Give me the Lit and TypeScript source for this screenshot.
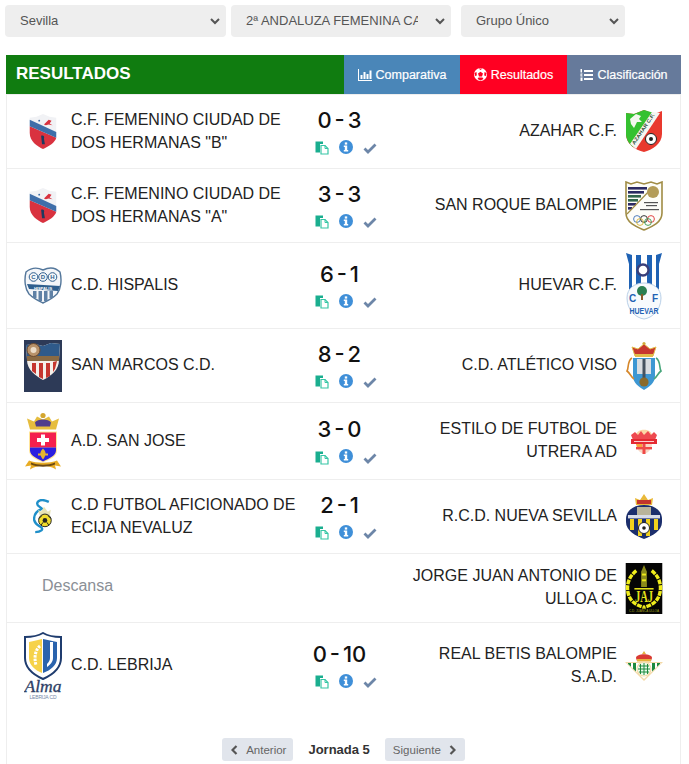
import { css, html, LitElement, svg } from 'lit';
import { customElement } from 'lit/decorators.js';

const shieldDosHermanas = svg`<svg width="30" height="36" viewBox="0 0 30 38">
  <path d="M1 4 L8 3 L15 0 L22 3 L29 4 V20 C29 29 21 34 15 37 C9 34 1 29 1 20 Z" fill="#f1f2f5"/>
  <path d="M1 20 V13 L29 25 C28 30 21 34 15 37 C9 34 1 29 1 20 Z" fill="#d9323f"/>
  <path d="M1 6 L29 19 V25 L1 13 Z" fill="#3e6ea9"/>
  <path d="M16 11 L21 6 L24 7 L22 10 L25 12 L21 11 L18 12 Z" fill="#d9323f"/>
  <circle cx="11" cy="7" r="1" fill="#3e6ea9"/>
  <path d="M13 23 C15 22 17 23 16 26 L17 32 L14 32 Z" fill="#1d3a5f"/>
</svg>`;

const azahar = svg`<svg width="38" height="43" viewBox="0 0 38 43">
  <path d="M1 3 L9 4 L19 0 L29 4 L37 1 V24 C37 34 27 40 19 42 C10 40 1 34 1 24 Z" fill="#e9392e"/>
  <path d="M1 3 L9 4 L19 0 L29 3 L8 37 C3 33 1 28 1 24 Z" fill="#35c130"/>
  <path d="M27 2 L35 3 L11 39 L5 34 Z" fill="#f5f5f0"/>
  <text x="0" y="0" transform="translate(9.500 35) rotate(-56)" font-family="Liberation Sans, sans-serif" font-size="5" font-weight="700" fill="#2f4f38" textLength="36" lengthAdjust="spacingAndGlyphs">AZAHAR C.F.</text>
  <path d="M5 9 L11 4 L16 6 L14 9 L17 12 L12 12 L9 18 L6 14 Z" fill="#f4f7ee"/>
  <circle cx="26" cy="29" r="5.500" fill="#fff" stroke="#222"/>
  <circle cx="26" cy="29" r="2" fill="#222"/>
</svg>`;

const sanRoque = svg`<svg width="38" height="50" viewBox="0 0 38 50">
  <path d="M1 1 L6 3 L12 1 L19 3 L26 1 L32 3 L37 1 V32 C37 42 26 46 19 49 C12 46 1 42 1 32 Z" fill="#fdfdf8" stroke="#a08c45" stroke-width="1.600"/>
  <g fill="#2b2a63"><rect x="3" y="6" width="19" height="2.600"/><rect x="3" y="10" width="16" height="2.600"/></g>
  <g fill="#32664c"><rect x="3" y="14" width="13" height="2.600"/><rect x="3" y="18" width="10" height="2.600"/></g>
  <g fill="#2b2a63"><rect x="3" y="22" width="8" height="2.600"/><rect x="3" y="26" width="4" height="2.600"/></g>
  <path d="M2 33 L28 6" stroke="#a08c45" stroke-width="1.200"/>
  <circle cx="28" cy="11" r="6" fill="#b39c57"/>
  <g fill="#555"><rect x="19" y="21" width="14" height="1.200"/><rect x="21" y="24" width="11" height="1.200"/><rect x="15" y="28" width="19" height="1.200"/></g>
  <g fill="none" stroke-width=".9"><circle cx="12" cy="38" r="3.400" stroke="#3d6fb5"/><circle cx="19" cy="38" r="3.400" stroke="#222"/><circle cx="26" cy="38" r="3.400" stroke="#d33"/><circle cx="15" cy="41" r="3.400" stroke="#d9b431"/><circle cx="23" cy="41" r="3.400" stroke="#3a9a4f"/></g>
</svg>`;

const hispalis = svg`<svg width="38" height="37" viewBox="0 0 38 37">
  <path d="M2 5 C8 0 13 0 19 3 C25 0 31 0 36 5 C38 13 37 22 33 27 C28 32 23 34 19 36 C15 34 10 32 5 27 C1 22 0 13 2 5 Z" fill="#f4f6f9" stroke="#54779b" stroke-width="1.400"/>
  <g fill="none" stroke="#2f5f8e"><circle cx="9.500" cy="10" r="4.300"/><circle cx="19" cy="10" r="4.300"/><circle cx="28.500" cy="10" r="4.300"/></g>
  <g font-family="Liberation Sans, sans-serif" font-size="6" font-weight="700" fill="#2f5f8e" text-anchor="middle"><text x="9.500" y="12.200">C</text><text x="19" y="12.200">D</text><text x="28.500" y="12.200">H</text></g>
  <path d="M3 17 L36 19 L34 24 L5 22 Z" fill="#2f5f8e"/>
  <text x="19" y="22.500" font-family="Liberation Sans, sans-serif" font-size="4" font-weight="700" fill="#fff" text-anchor="middle">HISPALIS</text>
  <g fill="#5f81a6"><rect x="9" y="24" width="3.500" height="7"/><rect x="14.500" y="24" width="3.500" height="10"/><rect x="20" y="24" width="3.500" height="10"/><rect x="25.500" y="24" width="3.500" height="7"/></g>
</svg>`;

const huevar = svg`<svg width="38" height="68" viewBox="0 0 38 68">
  <path d="M1 1 L10 4 L19 1 L28 4 L37 1 L34 12 V38 H4 V12 Z" fill="#fff"/>
  <path d="M1 1 L7 3 V38 H4 V12 Z M31 3 L37 1 L34 12 V38 H31 Z" fill="#1f62b4"/>
  <rect x="11" y="3" width="5" height="32" fill="#1f62b4"/><rect x="22" y="3" width="5" height="32" fill="#1f62b4"/>
  <rect x="12" y="14" width="14" height="3" fill="#1f62b4"/>
  <circle cx="18" cy="18" r="5.500" fill="#fff" stroke="#3a3f7a" stroke-width="2.400"/>
  <path d="M2 46 C2 36 10 31 19 31 C28 31 36 36 36 46 C36 58 27 66 19 67 C11 66 2 58 2 46 Z" fill="#f7fafd" stroke="#b9d0e8"/>
  <circle cx="17" cy="39" r="5" fill="#2a7f52"/>
  <rect x="16" y="42" width="2" height="6" fill="#8a5a2c"/>
  <g font-family="Liberation Sans, sans-serif" font-weight="700" fill="#1f62b4" text-anchor="middle"><text x="7.500" y="50" font-size="10">C</text><text x="30" y="50" font-size="10">F</text><text transform="translate(19 62) scale(1 1.400)" font-size="7">HUEVAR</text></g>
</svg>`;

const sanMarcos = svg`<svg width="38" height="52" viewBox="0 0 38 52">
  <rect width="38" height="52" fill="#2d3a57"/>
  <path d="M2 5 L11 4 L19 6 L27 3 L36 4 L35 20 C35 30 27 36 19 40 C12 36 3 30 3 20 Z" fill="#f5f0ea"/>
  <path d="M2 5 L11 4 L19 6 L27 3 L36 4 L35 17 L3 17 Z" fill="#2f5a8a"/>
  <g fill="#c5362f"><path d="M8 23 L12 23 L12 34 L8 31 Z"/><path d="M15 23 L19 23 L19 39 L15 37 Z"/><path d="M22 23 L26 23 L26 36 L22 38 Z"/><path d="M29 22 L33 21 L31 29 L29 32 Z"/></g>
  <rect x="3" y="16" width="32" height="5" fill="#8a6a43"/>
  <circle cx="9.500" cy="10" r="6.500" fill="#b8926a" stroke="#6d4a2e"/>
  <circle cx="9.500" cy="10" r="3" fill="#ecdcc8"/>
</svg>`;

const viso = svg`<svg width="38" height="50" viewBox="0 0 38 50">
  <path d="M10 15 L7 6 L13 8 L19 3 L25 8 L31 6 L28 15 Z" fill="#c7372f" stroke="#e3bd4a"/>
  <rect x="10" y="13" width="18" height="3" fill="#e3bd4a"/>
  <circle cx="19" cy="2.500" r="1.600" fill="#d1a93a"/>
  <path d="M8 17 H30 V35 C30 42 24 46 19 49 C14 46 8 42 8 35 Z" fill="#3d97d3"/>
  <rect x="12" y="18" width="14" height="15" fill="#d9dde1"/>
  <rect x="17.500" y="18" width="3" height="21" fill="#45525f"/>
  <circle cx="19" cy="41" r="4.600" fill="#8a6a2b"/>
  <path d="M7 17 C2 20 4 27 2 30 C5 32 6 36 9 38" fill="none" stroke="#d6872a" stroke-width="1.600"/>
  <path d="M31 17 C36 20 34 27 36 30 C33 32 32 36 29 38" fill="none" stroke="#46a57a" stroke-width="1.600"/>
</svg>`;

const sanJose = svg`<svg width="38" height="59" viewBox="0 0 38 58">
  <path d="M6 17 L3 6 L10 9 L13 4 L19 7 L25 4 L28 9 L35 6 L32 17 Z" fill="#e6bd3e"/>
  <path d="M11 10 C13 6 25 6 27 10 L26 14 H12 Z" fill="#4f3c8c"/>
  <circle cx="19" cy="3" r="2.600" fill="#d4a62f"/>
  <path d="M5 19 H33 V38 C33 44 26 47 19 50 C12 47 5 44 5 38 Z" fill="#ffe59a"/>
  <rect x="6" y="20" width="26" height="15" fill="#f4204d"/>
  <path d="M6 35 H32 V38 C32 43 25 46 19 49 C13 46 6 43 6 38 Z" fill="#2a1fe0"/>
  <path d="M17 22 H21 V25.500 H25 V29.500 H21 V33 H17 V29.500 H13 V25.500 H17 Z" fill="#fff"/>
  <path d="M19 36 C22 39 23 42 19 47 C15 42 16 39 19 36 Z M14 41 H24 V43 H14 Z" fill="#e3b32e"/>
  <path d="M1 54 L5 48 C12 51 26 51 33 48 L37 54 L31 53 L32 57 C24 52 14 52 6 57 L7 53 Z" fill="#e8ac24"/>
  <path d="M7 50 C14 53 24 53 31 50 V52 C24 55 14 55 7 52 Z" fill="#6e4b12"/>
</svg>`;

const utrera = svg`<svg width="28" height="27" viewBox="0 0 28 27">
  <path d="M6 7 C7 0 21 0 22 7 Z" fill="#fbd8a6"/>
  <path d="M1 7 L5 4 L8 7 L11 3 L14 7 L18 3 L21 7 L24 4 L27 7 L25 12 H3 Z" fill="#ee4a50"/>
  <rect x="1" y="11" width="26" height="5" fill="#e52a32"/>
  <rect x="4" y="13" width="20" height="1" fill="#fbd0d0"/>
  <path d="M6 16 H22 C22 21 18 25 14 26 C10 25 6 21 6 16 Z" fill="#f9d9c7"/>
  <rect x="12.500" y="16" width="3" height="10" fill="#ef4a48"/>
  <rect x="6" y="19" width="16" height="2.400" fill="#ef4a48"/>
  <path d="M6 16 L12 16 L12 19 L7 19 Z" fill="#f7a23a"/>
</svg>`;

const ecija = svg`<svg width="20" height="35" viewBox="0 0 20 36">
  <path d="M16 3 C8 -1 4 2 4 5 C4 8 8 8 9 10 C4 12 0 15 1 22 C2 26 5 27 8 29 C11 31 8 34 2 34" fill="none" stroke="#1f8fc9" stroke-width="2.400"/>
  <path d="M8 13 L11 8 L15 13 L18 11 L17 18 H7 L5 11 Z" fill="#e8e4b4"/>
  <circle cx="12" cy="22" r="6.500" fill="#f0dc2c" stroke="#222"/>
  <circle cx="12" cy="22" r="2.400" fill="#222"/>
  <path d="M6 20 L9 17 M18 20 L15 17 M8 27 L10 24 M16 27 L14 24" stroke="#222"/>
</svg>`;

const nuevaSevilla = svg`<svg width="38" height="47" viewBox="0 0 38 47">
  <path d="M11 12 L10 5 L15 7 L19 1 L23 7 L28 5 L27 12 Z" fill="#e9b93a"/>
  <rect x="12" y="7" width="14" height="4" fill="#c2352c"/>
  <path d="M1 26 C1 18 8 12 19 12 C30 12 37 18 37 26 V29 C37 38 27 43 19 46 C11 43 1 38 1 29 Z" fill="#1c2f6c"/>
  <rect x="12" y="14" width="14" height="8" fill="#b9b49a"/>
  <rect x="3" y="22" width="32" height="3.400" fill="#d8dce8"/>
  <g fill="#f2d21c"><rect x="5" y="26" width="4" height="11"/><rect x="13" y="26" width="4" height="17"/><rect x="21" y="26" width="4" height="17"/><rect x="29" y="26" width="4" height="11"/></g>
  <circle cx="19" cy="35" r="5.500" fill="#fff" stroke="#222"/>
  <circle cx="19" cy="35" r="1.800" fill="#222"/>
</svg>`;

const ulloa = svg`<svg width="38" height="51" viewBox="0 0 38 53">
  <rect width="38" height="53" fill="#050505"/>
  <g fill="none" stroke="#f0ed1c" stroke-width="3.600" stroke-dasharray="5 1">
    <path d="M11 8 C3 14 0 24 3 33 C5 40 11 44 19 46"/>
    <path d="M27 8 C35 14 38 24 35 33 C33 40 27 44 19 46"/>
  </g>
  <path d="M16 9 L19 2 L22 9 V25 H16 Z" fill="#8c8b1a"/>
  <rect x="17" y="11" width="4" height="2" fill="#f0ed1c"/>
  <rect x="17" y="17" width="4" height="2" fill="#f0ed1c"/>
  <text transform="translate(19 41) scale(1 1.600)" font-family="Liberation Serif, serif" font-size="11" font-weight="700" fill="#e6e31a" text-anchor="middle">JAJ</text>
  <rect x="9" y="26" width="20" height="1.600" fill="#e6e31a"/>
  <text x="19" y="51" font-family="Liberation Sans, sans-serif" font-size="3.200" fill="#aaa91c" text-anchor="middle">C.D. JUANCA ULLOA</text>
</svg>`;

const lebrija = svg`<svg width="38" height="68" viewBox="0 0 38 68">
  <path d="M19 1 C24 4 30 5 37 5 V26 C37 37 28 43 19 47 C10 43 1 37 1 26 V5 C8 5 14 4 19 1 Z" fill="#fff" stroke="#1f3c6e" stroke-width="2"/>
  <path d="M5 10 C10 9 14 8 18 7 V41 C11 38 5 33 5 26 Z" fill="#f6d24a"/>
  <path d="M19 7 C24 8 28 9 33 10 V26 C33 33 27 38 19 41 Z" fill="#2a63ad"/>
  <path d="M24 10 H29 V26 C29 30 26 33 23 35 V32 C25 30 26 28 26 26 V10 Z" fill="#fff"/>
  <path d="M16 14 C11 18 10 26 12 33" fill="none" stroke="#fff" stroke-width="3" stroke-dasharray="2.500 1"/>
  <text x="19" y="60" font-family="Liberation Serif, serif" font-size="16" font-style="italic" fill="#2e3f66" stroke="#2e3f66" stroke-width=".3" text-anchor="middle" textLength="37" lengthAdjust="spacingAndGlyphs">Alma</text>
  <text x="19" y="67" font-family="Liberation Sans, sans-serif" font-size="5" fill="#7487a8" text-anchor="middle" textLength="27">LEBRIJA CD</text>
</svg>`;

const betis = svg`<svg width="38" height="30" viewBox="0 0 38 30">
  <defs><clipPath id="betis-tri"><path d="M2 12 H36 L19 28 Z"/></clipPath></defs>
  <path d="M11 7 C11 2 27 2 27 7 L26 10 H12 Z" fill="#d93a34"/>
  <path d="M19 0 L21 3 H17 Z" fill="#e5b23c"/>
  <rect x="12" y="8" width="14" height="2.500" fill="#e5b23c"/>
  <path d="M0 11 H38 L19 30 Z" fill="#f3d9a7"/>
  <path d="M2 12 H36 L19 28 Z" fill="#fff"/>
  <g fill="#1d8a3f" clip-path="url(#betis-tri)"><rect x="3" y="12" width="3" height="16"/><rect x="8" y="12" width="3" height="16"/><rect x="27" y="12" width="3" height="16"/><rect x="32" y="12" width="3" height="16"/></g>
  <circle cx="19" cy="18" r="7" fill="#eafbea" stroke="#f3d9a7" stroke-width="1.200"/>
  <path d="M19 12 V24 M13 18 H25 M15.500 13 V23 M22.500 13 V23 M14 15 H24 M14 21 H24" stroke="#1d8a3f"/>
</svg>`;

const pasteIcon = html`<svg width="14" height="14" viewBox="0 0 14 14">
  <path d="M0.500 0.500 H8 V3 H5 V11.500 H0.500 Z" fill="#1aae8f"/>
  <path d="M6 4.500 H10 L13 7.500 V13 H6 Z" fill="#fff" stroke="#37c6a6" stroke-width="1.200"/>
  <path d="M10 4.500 V7.500 H13" fill="none" stroke="#37c6a6"/>
</svg>`;

const infoIcon = html`<svg class="raised" width="14" height="14" viewBox="0 0 14 14">
  <circle cx="7" cy="7" r="7" fill="#3f8fd8"/>
  <rect x="5.800" y="2.400" width="2.400" height="2.200" fill="#fff"/>
  <path d="M4.800 5.600 H8.200 V10 H9.200 V11.500 H4.800 V10 H5.800 V7.100 H4.800 Z" fill="#fff"/>
</svg>`;

const checkIcon = html`<svg width="14" height="14" viewBox="0 0 14 14">
  <path d="M1.500 7.500 L5 11 L12.500 3.500" fill="none" stroke="#6d86a8" stroke-width="2.800"/>
</svg>`;

type Match = {
  home: string;
  homeLogo: unknown;
  away: string;
  awayLogo: unknown;
  score?: string;
};

const matches: Match[] = [
  { home: 'C.F. FEMENINO CIUDAD DE DOS HERMANAS "B"', homeLogo: shieldDosHermanas, score: '0 - 3', away: 'AZAHAR C.F.', awayLogo: azahar },
  { home: 'C.F. FEMENINO CIUDAD DE DOS HERMANAS "A"', homeLogo: shieldDosHermanas, score: '3 - 3', away: 'SAN ROQUE BALOMPIE', awayLogo: sanRoque },
  { home: 'C.D. HISPALIS', homeLogo: hispalis, score: '6 - 1', away: 'HUEVAR C.F.', awayLogo: huevar },
  { home: 'SAN MARCOS C.D.', homeLogo: sanMarcos, score: '8 - 2', away: 'C.D. ATLÉTICO VISO', awayLogo: viso },
  { home: 'A.D. SAN JOSE', homeLogo: sanJose, score: '3 - 0', away: 'ESTILO DE FUTBOL DE UTRERA AD', awayLogo: utrera },
  { home: 'C.D FUTBOL AFICIONADO DE ECIJA NEVALUZ', homeLogo: ecija, score: '2 - 1', away: 'R.C.D. NUEVA SEVILLA', awayLogo: nuevaSevilla },
  { home: 'Descansa', homeLogo: null, away: 'JORGE JUAN ANTONIO DE ULLOA C.', awayLogo: ulloa },
  { home: 'C.D. LEBRIJA', homeLogo: lebrija, score: '0 - 10', away: 'REAL BETIS BALOMPIE S.A.D.', awayLogo: betis },
];

@customElement('app-root')
export class AppRoot extends LitElement {
  static styles = css`
    :host {
      display: block;
      height: 764px;
      overflow: hidden;
      background: #fff;
      font-family: 'Liberation Sans', Arial, sans-serif;
      color: #222;
    }

    .filters {
      display: flex;
      padding: 5px 0 18px 5px;
    }

    select {
      height: 32px;
      border: none;
      border-right: 3px solid #eee;
      border-radius: 4px;
      background-color: #eee;
      color: #555;
      font-family: inherit;
      font-size: 13px;
      padding: 0 14px 2px 11px;
    }

    .sel-1 { width: 221px; margin-right: 5px; }
    .sel-2 { width: 220px; margin-right: 10px; }
    .sel-3 { width: 164px; }

    .panel {
      margin: 0 8px 0 6px;
    }

    .head {
      display: flex;
      height: 39px;
    }

    .title {
      flex: 1;
      display: flex;
      align-items: center;
      padding: 0 0 1px 10px;
      background: #107c10;
      color: #fff;
      font-size: 17px;
      font-weight: 700;
    }

    .tab {
      display: flex;
      align-items: center;
      justify-content: center;
      gap: 4px;
      color: #fff;
      font-size: 12.5px;
      -webkit-text-stroke: 0.2px #fff;
    }

    .tab.comp { width: 116px; background: #4a86b8; }
    .tab.res { width: 107px; background: #ff0022; }
    .tab.clas { width: 114px; background: #667a9b; }

    .list {
      border-top: 1px solid #eee;
      border-left: 1px solid #eee;
      border-right: 1px solid #eee;
      height: 670px;
    }

    .row {
      display: grid;
      grid-template-columns: 38px 239px 89px 1fr 38px;
      align-items: center;
      padding: 8.5px 17px;
      border-bottom: 1px solid #eee;
    }

    .row:nth-child(8) {
      border-bottom: none;
    }

    .logo {
      display: flex;
      justify-content: center;
      align-items: center;
    }

    svg {
      display: block;
    }

    .name {
      font-size: 16px;
      line-height: 23px;
      padding-bottom: 2px;
    }

    .home { padding-left: 9px; }
    .away { padding-left: 10px; padding-right: 8px; text-align: right; }

    .rest {
      color: #8a8f96;
      padding: 0 0 5px 18px;
      grid-column: 1 / 4;
      font-size: 16px;
    }

    .score {
      display: flex;
      flex-direction: column;
      align-items: center;
      height: 56px;
    }

    .goals {
      font-family: Inter, 'Liberation Sans', sans-serif;
      font-size: 22px;
      font-weight: 500;
      line-height: 33px;
      word-spacing: -3px;
      color: #111;
      white-space: nowrap;
      margin-right: 12px;
    }

    .actions {
      display: flex;
      gap: 10px;
      height: 23px;
      align-items: center;
    }

    .raised {
      margin-bottom: 3px;
    }

    .pager {
      display: flex;
      justify-content: center;
      align-items: center;
      gap: 15px;
      padding-top: 30px;
    }

    .pbtn {
      display: flex;
      align-items: center;
      height: 23px;
      border-radius: 3px;
      background: #e1e5ec;
      color: #666;
      font-size: 11.5px;
    }

    .pbtn.prev { gap: 8px; padding: 0 7px 0 9px; }
    .pbtn.next { gap: 8px; padding: 0 9px 0 8px; }

    .round {
      font-size: 13px;
      font-weight: 700;
      color: #333;
    }
  `;

  renderRow(m: Match) {
    const first = m.homeLogo
      ? html`<div class="logo">${m.homeLogo}</div><div class="name home">${m.home}</div>
          <div class="score">
            <div class="goals">${m.score}</div>
            <div class="actions">${pasteIcon}${infoIcon}${checkIcon}</div>
          </div>`
      : html`<div class="rest">${m.home}</div>`;
    return html`<div class="row">
      ${first}
      <div class="name away">${m.away}</div>
      <div class="logo">${m.awayLogo}</div>
    </div>`;
  }

  render() {
    return html`
      <div class="filters">
        <select class="sel-1"><option>Sevilla</option></select>
        <select class="sel-2"><option>2ª ANDALUZA FEMENINA CADETE</option></select>
        <select class="sel-3"><option>Grupo Único</option></select>
      </div>
      <div class="panel">
        <div class="head">
          <div class="title">RESULTADOS</div>
          <div class="tab comp">
            <svg width="14" height="12" viewBox="0 0 14 12"><path d="M0 0 H1 V11 H14 V12 H0 Z M2.500 6 H4.500 V10 H2.500 Z M5.500 3 H7.500 V10 H5.500 Z M8.500 5 H10.500 V10 H8.500 Z M11.500 1.500 H13.500 V10 H11.500 Z" fill="#fff"/></svg>
            Comparativa
          </div>
          <div class="tab res">
            <svg width="13" height="13" viewBox="0 0 13 13"><circle cx="6.500" cy="6.500" r="6.500" fill="#fff"/><path d="M6.500 3.800 L9 5.600 L8 8.500 H5 L4 5.600 Z M4.500 0.500 H8.500 L6.500 2 Z M0.500 5 L2.500 4 L2.800 7.500 L1 8 Z M12.500 5 L10.500 4 L10.200 7.500 L12 8 Z M3.500 11 L4.500 9.500 H8.500 L9.500 11 L6.500 12.500 Z" fill="#ff0022"/></svg>
            Resultados
          </div>
          <div class="tab clas">
            <svg width="13" height="12" viewBox="0 0 13 12"><path d="M4 1 H13 V3 H4 Z M4 5 H13 V7 H4 Z M4 9 H13 V11 H4 Z M0.500 0 H2 V3.500 H0.500 Z M0.500 4.500 H2.500 V5.500 H1.500 V6.500 H2.500 V7.500 H0.500 Z M0.500 8.500 H2.500 V12 H0.500 Z" fill="#fff"/></svg>
            Clasificación
          </div>
        </div>
        <div class="list">
          ${matches.map((m) => this.renderRow(m))}
          <div class="pager">
            <div class="pbtn prev">
              <svg width="7" height="10" viewBox="0 0 7 10"><path d="M5.500 1 L1.500 5 L5.500 9" fill="none" stroke="#555" stroke-width="2.200"/></svg>
              Anterior
            </div>
            <div class="round">Jornada 5</div>
            <div class="pbtn next">
              Siguiente
              <svg width="7" height="10" viewBox="0 0 7 10"><path d="M1.500 1 L5.500 5 L1.500 9" fill="none" stroke="#555" stroke-width="2.200"/></svg>
            </div>
          </div>
        </div>
      </div>
    `;
  }
}
